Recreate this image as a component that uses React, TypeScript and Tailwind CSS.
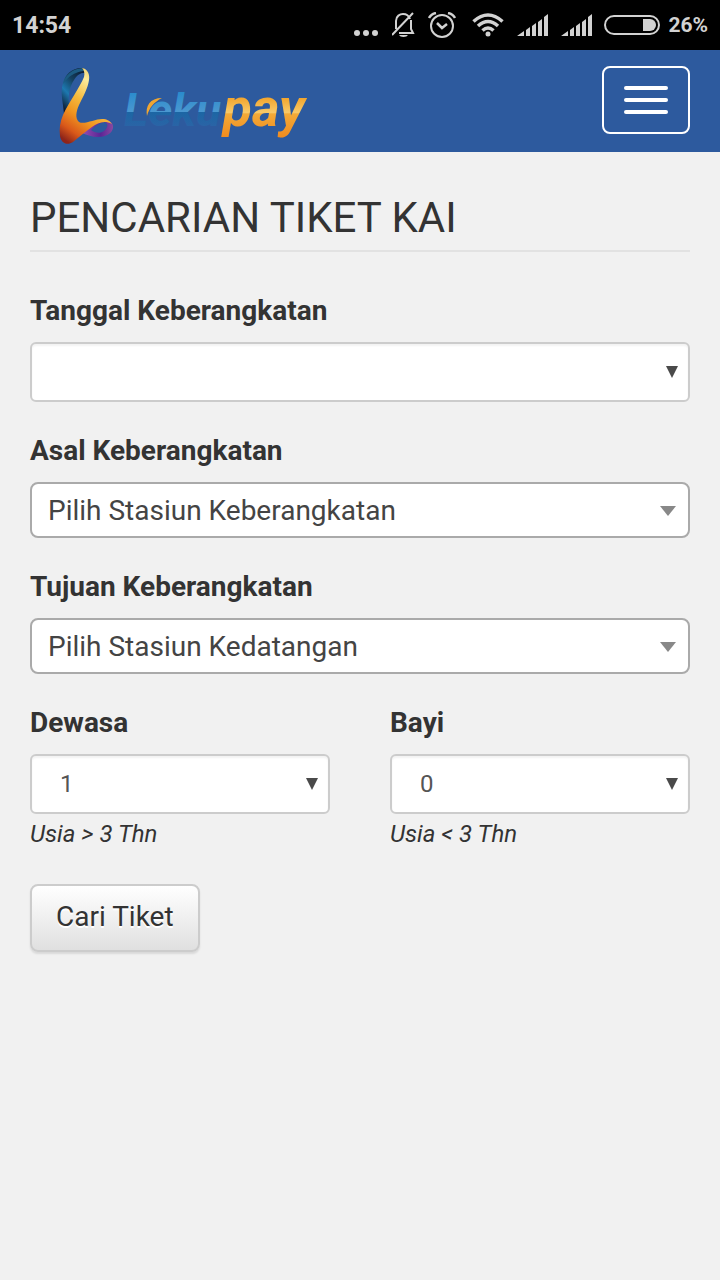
import { useState } from 'react';
import type { ReactNode } from 'react';

function SignalIcon() {
  return (
    <svg width="32" height="22" viewBox="0 0 32 22" fill="currentColor" aria-hidden="true">
      <path d="M1 22 8 17V22ZM10 16 14 13V22H10ZM16 12 20 9V22H16ZM22 8 26 5V22H22ZM28 3 32 0V22H28Z" />
    </svg>
  );
}

function StatusBar() {
  return (
    <div className="flex h-[50px] items-center justify-between bg-black px-3 text-[#d2d2d2]">
      <span className="pt-0.5 text-[23px] font-bold">14:54</span>
      <div className="flex items-center">
        <svg className="mr-3" width="26" height="26" viewBox="0 0 26 26" fill="currentColor" aria-hidden="true">
          <circle cx="3" cy="21" r="3" />
          <circle cx="12" cy="21" r="3" />
          <circle cx="21" cy="21" r="3" />
        </svg>
        <svg className="mr-3" width="24" height="26" viewBox="0 0 24 26" fill="none" stroke="currentColor" strokeWidth="2" aria-hidden="true">
          <path d="M4 17V9C4 4 8 2 11 2 14 2 17 4 18 7M19 8V17L21 21H7M0 23 21 1" />
          <path d="M7 23H16Q15 25 11.500 25T7 23Z" fill="currentColor" stroke="none" />
        </svg>
        <svg className="mr-4" width="28" height="26" viewBox="0 0 28 26" fill="none" stroke="currentColor" strokeWidth="2" aria-hidden="true">
          <circle cx="14" cy="14" r="11" />
          <path d="m9 11 5 5 5-4" strokeWidth="2.500" />
          <path d="M1 6Q3 2 8 1M27 6Q25 2 20 1" strokeWidth="2.500" />
        </svg>
        <svg className="mr-3" width="32" height="24" viewBox="0 0 32 24" fill="none" stroke="currentColor" strokeWidth="3.500" aria-hidden="true">
          <path d="M1.500 8.500Q16-4.500 30.500 8.500M6 13Q16 4 26 13M10.500 17.500Q16 12.500 21.500 17.500" />
          <circle cx="16" cy="21" r="2.500" fill="currentColor" stroke="none" />
        </svg>
        <span className="mr-3 flex gap-3">
          <SignalIcon />
          <SignalIcon />
        </span>
        <svg className="mr-2" width="56" height="22" viewBox="0 0 56 22" fill="none" aria-hidden="true">
          <rect x="1" y="2" width="54" height="18" rx="9" stroke="currentColor" strokeWidth="2" />
          <path d="M39 5H46A6 6 0 0 1 46 17H39Z" fill="currentColor" />
        </svg>
        <span className="pt-0.5 text-[21px] font-bold">26%</span>
      </div>
    </div>
  );
}

function Logo() {
  return (
    <svg width="260" height="84" viewBox="0 0 260 84" role="img" aria-label="Lekupay">
      <defs>
        <linearGradient id="gold" x1="0.7" y1="0" x2="0.2" y2="1">
          <stop offset="0" stopColor="#f0c85a" />
          <stop offset="0.2" stopColor="#fbeb9c" />
          <stop offset="0.45" stopColor="#f5b93c" />
          <stop offset="0.65" stopColor="#f0941f" />
          <stop offset="0.85" stopColor="#d9581a" />
          <stop offset="1" stopColor="#8e2419" />
        </linearGradient>
        <linearGradient id="back" x1="0.8" y1="0" x2="0.2" y2="1">
          <stop offset="0" stopColor="#0b1830" />
          <stop offset="0.35" stopColor="#14405f" />
          <stop offset="0.65" stopColor="#1d78b0" />
          <stop offset="1" stopColor="#0c1428" />
        </linearGradient>
        <linearGradient id="loop" x1="0" y1="0" x2="1" y2="0">
          <stop offset="0" stopColor="#9450b0" />
          <stop offset="0.6" stopColor="#5c2496" />
          <stop offset="1" stopColor="#8a4aa0" />
        </linearGradient>
        <linearGradient id="blueText" gradientUnits="userSpaceOnUse" x1="0" y1="22" x2="0" y2="60">
          <stop offset="0" stopColor="#2389cc" />
          <stop offset="0.62" stopColor="#4a97d0" />
          <stop offset="0.64" stopColor="#1c66a4" />
          <stop offset="1" stopColor="#2a64a6" />
        </linearGradient>
        <linearGradient id="goldText" gradientUnits="userSpaceOnUse" x1="0" y1="32" x2="0" y2="70">
          <stop offset="0" stopColor="#f2a52e" />
          <stop offset="0.38" stopColor="#f8c968" />
          <stop offset="0.42" stopColor="#f3aa38" />
          <stop offset="1" stopColor="#f08d20" />
        </linearGradient>
      </defs>
      <path d="M26 2C15 2 9 9 7 17 4 27 7 36 8 48L13 38C12 28 14 20 18 14 21 9 25 6 31 7 30 4 28 2 26 2Z" fill="url(#back)" />
      <path d="M26 2C15 3 9 10 7 18 12 11 18 6 28 5Z" fill="#1c5b82" />
      <path
        fillRule="evenodd"
        d="M46 53C53 53 58 57 57 62 56 68 49 71 42 71 36 71 31 69 26 67L33 62 37 60ZM48 56C44 57 40 59 35 64 39 67 44 68 48 65 52 62 53 57 48 56Z"
        fill="url(#loop)"
      />
      <path d="M26 2C32 3 34 9 33 14 32 22 27 31 23 39 20 46 19 52 23 56 28 59 39 53 46 53 51 53 54 55 56 58 48 54 42 57 36 61 29 66 23 71 17 76 11 80 5 77 4 70 3 63 4 56 7 49 13 36 24 21 28 11 29 7 28 4 26 2Z" fill="url(#gold)" />
      <text x="68" y="60" fontSize="46" className="font-['Roboto'] font-bold italic" fill="url(#blueText)">Leku</text>
      <path d="M91 50C89 40 94 32 106 32 98 36 93 42 91 50Z" fill="#efa632" />
      <text x="167" y="60" fontSize="53" className="font-['Roboto'] font-bold italic" fill="url(#goldText)">pay</text>
    </svg>
  );
}

function Header() {
  return (
    <header className="flex h-[102px] items-start justify-between bg-[#2d5a9e] pt-4 pr-[30px] pl-14">
      <a href="#" className="block">
        <Logo />
      </a>
      <button
        type="button"
        aria-label="Menu"
        className="flex h-[68px] w-[88px] flex-col items-center justify-center gap-2 rounded-lg border-2 border-white"
      >
        <span className="h-1 w-11 rounded-xs bg-white"></span>
        <span className="h-1 w-11 rounded-xs bg-white"></span>
        <span className="h-1 w-11 rounded-xs bg-white"></span>
      </button>
    </header>
  );
}

function Field({ id, label, help, children }: { id: string; label: string; help?: string; children: ReactNode }) {
  return (
    <div className="mb-[30px]">
      <label htmlFor={id} className="mb-3 block text-[28px] leading-[38px] font-bold">
        {label}
      </label>
      <div className="relative">{children}</div>
      {help && <p className="text-2xl leading-10 italic">{help}</p>}
    </div>
  );
}

// narrow dark arrow of the native controls
function NativeArrow() {
  return (
    <svg className="pointer-events-none absolute top-6 right-3" width="12" height="12" viewBox="0 0 12 12" aria-hidden="true">
      <path d="M0 0H12L6 12Z" fill="#4a4a4a" />
    </svg>
  );
}

function StationSelect({ id, placeholder }: { id: string; placeholder: string }) {
  return (
    <>
      <select
        id={id}
        className="block h-14 w-full appearance-none rounded-lg border-2 border-[#aaa] bg-white pt-0.5 pr-10 pl-4 text-[28px] text-[#444]"
      >
        <option>{placeholder}</option>
      </select>
      <svg className="pointer-events-none absolute top-6 right-3" width="20" height="10" viewBox="0 0 20 10" aria-hidden="true">
        <path d="M2 0H18L10 10Z" fill="#888" />
      </svg>
    </>
  );
}

function PassengerSelect({ id, initial }: { id: string; initial: number }) {
  const [count, setCount] = useState(initial);

  return (
    <>
      <select
        id={id}
        value={count}
        onChange={(e) => setCount(Number(e.target.value))}
        className="block h-[60px] w-full appearance-none rounded-md border-2 border-[#ccc] bg-white pr-10 pl-7 text-2xl text-[#555] shadow-[inset_0_2px_2px_rgba(0,0,0,0.05)]"
      >
        {[0, 1, 2, 3, 4].map((n) => (
          <option key={n} value={n}>{n}</option>
        ))}
      </select>
      <NativeArrow />
    </>
  );
}

function App() {
  return (
    <div className="min-h-screen bg-[#f1f1f1] font-['Roboto',sans-serif] text-[#333]">
      <StatusBar />
      <Header />

      <main className="px-[30px] pt-10">
        <h1 className="mb-10 border-b-2 border-[#e2e2e2] pb-1.5 text-[42px] leading-[52px]">PENCARIAN TIKET KAI</h1>

        <form onSubmit={(e) => e.preventDefault()}>
          <Field id="tanggal" label="Tanggal Keberangkatan">
            <input
              id="tanggal"
              type="text"
              className="block h-[60px] w-full rounded-md border-2 border-[#ccc] bg-white pr-10 pl-7 text-2xl text-[#555] shadow-[inset_0_2px_2px_rgba(0,0,0,0.05)]"
            />
            <NativeArrow />
          </Field>

          <Field id="asal" label="Asal Keberangkatan">
            <StationSelect id="asal" placeholder="Pilih Stasiun Keberangkatan" />
          </Field>

          <Field id="tujuan" label="Tujuan Keberangkatan">
            <StationSelect id="tujuan" placeholder="Pilih Stasiun Kedatangan" />
          </Field>

          <div className="grid grid-cols-2 gap-[60px]">
            <Field id="dewasa" label="Dewasa" help="Usia > 3 Thn">
              <PassengerSelect id="dewasa" initial={1} />
            </Field>
            <Field id="bayi" label="Bayi" help="Usia < 3 Thn">
              <PassengerSelect id="bayi" initial={0} />
            </Field>
          </div>

          <button
            type="submit"
            className="h-[68px] rounded-lg border-2 border-[#ccc] bg-linear-to-b from-white to-[#e0e0e0] px-6 pb-0.5 text-[28px] shadow-[0_2px_2px_rgba(0,0,0,0.1)] [text-shadow:0_2px_0_#fff]"
          >
            Cari Tiket
          </button>
        </form>
      </main>
    </div>
  );
}

export default App;
